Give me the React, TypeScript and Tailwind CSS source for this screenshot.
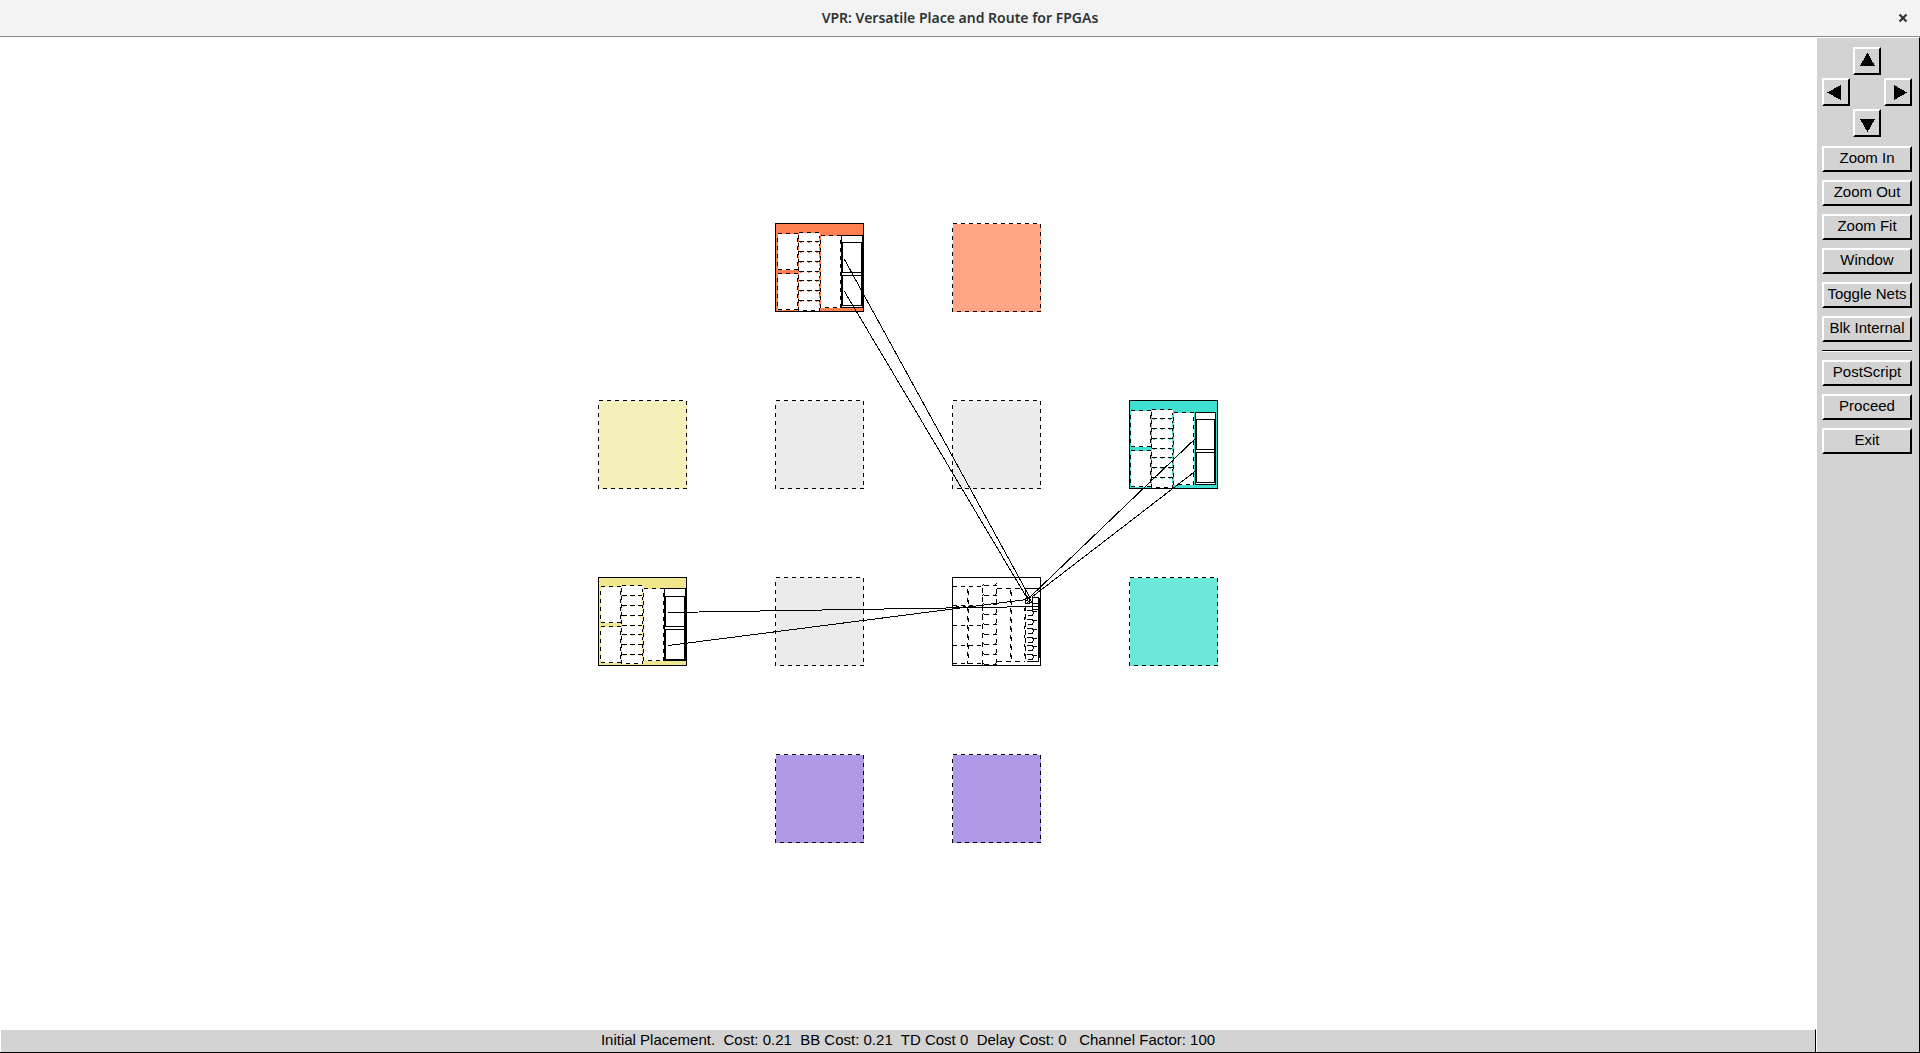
import React from "react";

type Point = { x: number; y: number };

const EMPTY_BLOCKS: (Point & { fill: string })[] = [
  { x: 952, y: 223, fill: "#ffa584" },
  { x: 598, y: 400, fill: "#f5efb9" },
  { x: 775, y: 400, fill: "#ebebeb" },
  { x: 952, y: 400, fill: "#ebebeb" },
  { x: 775, y: 577, fill: "#ebebeb" },
  { x: 1129, y: 577, fill: "#6be8da" },
  { x: 775, y: 754, fill: "#b098e6" },
  { x: 952, y: 754, fill: "#b098e6" },
];

const NETS = [
  [844, 259, 1030, 598],
  [844, 291, 1028, 600],
  [1197, 436, 1029, 597],
  [1197, 469, 1032, 596],
  [668, 612, 1038, 606],
  [668, 645, 1026, 599],
];

function EmptyBlock({ x, y, fill }: Point & { fill: string }) {
  return <rect x={x} y={y} width={88} height={88} fill={fill} strokeDasharray="4 4" />;
}

type IoProps = Point & { fill: string; left: number; top: number; right: number };

function IoBlock({ x, y, fill, left, top, right }: IoProps) {
  return (
    <g transform={`translate(${x} ${y})`}>
      <rect width={88} height={88} fill={fill} />
      <g fill="#fff">
        <rect x={left} y={top} width={20} height={36} strokeDasharray="4 4" />
        <rect x={left} y={top + 40} width={20} height={36} strokeDasharray="4 4" />
        <rect x={left + 21} y={top - 1} width={21} height={78} strokeDasharray="4 4" />
        {[18, 28, 38, 48, 57, 67, 77].map((d) => (
          <g key={d}>
            <line x1={left + 22} x2={left + 42} y1={d + 1} y2={d + 1} stroke={fill} strokeDasharray="2 6" />
            <line x1={left + 21} x2={left + 42} y1={d} y2={d} strokeDasharray="5 3" />
          </g>
        ))}
        <line x1={left + 42} x2={left + 42} y1={10} y2={86} stroke={fill} strokeDasharray="4 4" strokeDashoffset={4} />
        <rect x={left + 43} y={top + 2} width={20} height={72} strokeDasharray="4 4" />
        <rect x={66} y={top + 2} width={right - 66} height={72} />
        <rect x={67} y={19} width={right - 68} height={30} />
        <rect x={67} y={52} width={right - 68} height={30} />
        <line x1={66} x2={66} y1={19} y2={82} />
        <line x1={right - 1} x2={right - 1} y1={19} y2={82} />
      </g>
    </g>
  );
}

function LogicBlock({ x, y }: Point) {
  return (
    <g transform={`translate(${x} ${y})`} fill="none">
      <rect width={88} height={88} fill="#fff" />
      {[9, 28, 48, 68, 86].map((d) => (
        <line key={d} x1={0} x2={30} y1={d} y2={d} strokeDasharray="4 4" />
      ))}
      <line x1={0} x2={0} y1={9} y2={86} strokeDasharray="4 4" />
      <line x1={3} x2={14} y1={29} y2={29} strokeDasharray="3 4" />
      <line x1={15} x2={15} y1={11} y2={86} strokeDasharray="4 5" />
      <line x1={16} x2={16} y1={13} y2={86} strokeDasharray="4 5" />
      <line x1={30} x2={30} y1={10} y2={86} strokeDasharray="5 4" />
      {[8, 18, 27, 37, 47, 57, 67, 77, 87].map((d) => (
        <g key={d}>
          <line x1={31} x2={44} y1={d} y2={d} strokeDasharray="5 4" />
          <line x1={29} x2={31} y1={d + 1} y2={d - 1} />
          <line x1={42} x2={44} y1={d} y2={d - 2} />
        </g>
      ))}
      <line x1={44} x2={44} y1={11} y2={87} strokeDasharray="4 6" />
      <line x1={44} x2={72} y1={11} y2={11} strokeDasharray="5 4" />
      <line x1={44} x2={72} y1={84} y2={84} strokeDasharray="5 4" />
      <line x1={58} x2={58} y1={12} y2={84} strokeDasharray="4 5" />
      <line x1={59} x2={59} y1={14} y2={84} strokeDasharray="4 5" />
      <line x1={73} x2={73} y1={12} y2={84} strokeDasharray="5 3" />
      <line x1={72} x2={72} y1={30} y2={84} strokeDasharray="3 6" />
      {[33, 42, 51, 60, 68, 77].map((d) => (
        <path key={d} d={`M74 ${d}h5l2 1h3M75 ${d + 5}h5l1-3`} />
      ))}
      <rect x={73} y={21} width={4} height={5} />
      <path d="M74 18l4 4-5 5M76 18l-3 4 6 4M78 23l3 4" />
      <rect x={80} y={20} width={6} height={6} />
      <rect x={80} y={26} width={6} height={6} />
      <path d="M73 11H86M74 84H86V80M86 20V80M87 20V80" />
    </g>
  );
}

function Canvas() {
  return (
    <svg
      viewBox="0 37 1817 992"
      className="block min-h-0 w-full flex-1"
      stroke="#000"
      strokeWidth={1}
      shapeRendering="crispEdges"
      role="img"
      aria-label="Placement"
    >
      <g transform="translate(0.5 0.5)">
        {EMPTY_BLOCKS.map((b) => (
          <EmptyBlock key={`${b.x}-${b.y}`} {...b} />
        ))}
        <IoBlock x={775} y={223} left={2} top={10} right={87} fill="#ff7f50" />
        <IoBlock x={1129} y={400} left={1} top={10} right={86} fill="#40e0d0" />
        <IoBlock x={598} y={577} left={2} top={9} right={87} fill="#f0e68c" />
        <LogicBlock x={952} y={577} />
        {NETS.map(([x1, y1, x2, y2]) => (
          <line key={`${x1}-${y1}`} x1={x1} y1={y1} x2={x2} y2={y2} />
        ))}
      </g>
    </svg>
  );
}

const BEVEL =
  "border-2 border-t-white border-l-white border-r-black border-b-black bg-[#d3d3d3] active:border-t-black active:border-l-black";

function ArrowButton({ label, points, className }: { label: string; points: string; className: string }) {
  return (
    <button type="button" aria-label={label} className={`flex size-7 items-center justify-center ${BEVEL} ${className}`}>
      <svg viewBox="0 0 16 16" className="size-4 shrink-0 overflow-visible" shapeRendering="crispEdges">
        <polygon points={points} />
      </svg>
    </button>
  );
}

function MenuButton({ children }: { children: string }) {
  return (
    <button type="button" className={`flex h-[26px] w-full items-center justify-center whitespace-nowrap pb-0.5 text-[15px] leading-5 ${BEVEL}`}>
      {children}
    </button>
  );
}

export default function App() {
  return (
    <div className="flex h-screen flex-col border-b border-black bg-white font-['Liberation_Sans',Arial,sans-serif] text-black">
      <header className="grid h-[37px] shrink-0 grid-cols-[1fr_auto_1fr] items-center border-b border-[#8b8e88] bg-[#f3f3f3] text-[#2e3436]">
        <h1 className="col-start-2 font-['Noto_Sans','Open_Sans',sans-serif] text-sm font-semibold">
          VPR: Versatile Place and Route for FPGAs
        </h1>
        <button type="button" aria-label="Close" className="mr-2 justify-self-end p-1">
          <svg viewBox="0 0 10 10" className="size-[10px]" stroke="currentColor" strokeWidth={2.2}>
            <path d="M1.5 1.5 8.5 8.5M8.5 1.5 1.5 8.5" />
          </svg>
        </button>
      </header>
      <div className="flex min-h-0 flex-1">
        <main className="flex min-w-0 flex-1 flex-col">
          <Canvas />
          <footer className="mr-px ml-px flex h-[23px] shrink-0 items-center justify-center border-t border-r border-t-white border-r-black bg-[#d3d3d3] whitespace-pre pb-0.5 text-[15px] leading-5">
            {"Initial Placement.  Cost: 0.21  BB Cost: 0.21  TD Cost 0  Delay Cost: 0   Channel Factor: 100"}
          </footer>
        </main>
        <aside className="w-[103px] shrink-0 border-t border-r border-t-white border-r-black bg-[#d3d3d3] pt-[9px] pr-[7px] pl-[5px]">
          <div className="grid grid-cols-3 gap-y-[3px]">
            <ArrowButton label="Up" points="8.5,-0.5 16,13 1,13" className="col-start-2 justify-self-center" />
            <ArrowButton label="Left" points="-1,8.5 13,1 13,16" className="col-start-1 row-start-2" />
            <ArrowButton label="Right" points="17,8.5 4,1 4,16" className="col-start-3 row-start-2 justify-self-end" />
            <ArrowButton label="Down" points="8.5,17 16,4 1,4" className="col-start-2 row-start-3 justify-self-center" />
          </div>
          <div className="mt-[9px] flex flex-col gap-2">
            {["Zoom In", "Zoom Out", "Zoom Fit", "Window", "Toggle Nets", "Blk Internal"].map((t) => (
              <MenuButton key={t}>{t}</MenuButton>
            ))}
            <hr className="h-[2px] border-t border-b border-t-black border-b-white" />
            {["PostScript", "Proceed", "Exit"].map((t) => (
              <MenuButton key={t}>{t}</MenuButton>
            ))}
          </div>
        </aside>
      </div>
    </div>
  );
}
